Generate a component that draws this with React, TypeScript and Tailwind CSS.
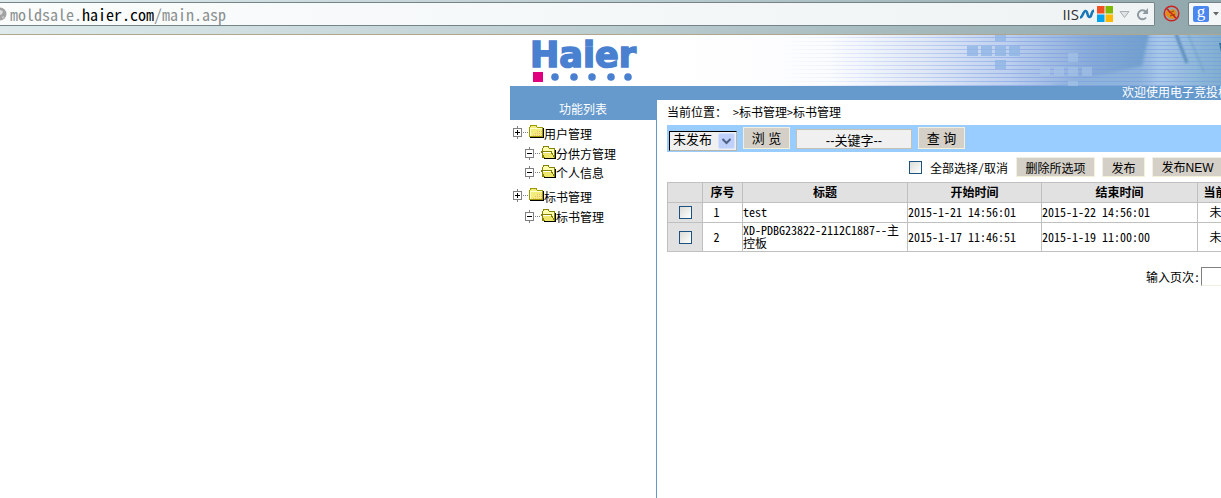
import { useState } from 'react';

const UI_FONT = "font-['Noto_Sans_Mono_CJK_SC','Noto_Sans_CJK_SC',monospace]";
const CONTROL_FONT = "font-['Liberation_Sans','Noto_Sans_CJK_SC',sans-serif]";
const BUTTON =
  'shrink-0 whitespace-nowrap border border-[#f1efe2] border-b-[#f5f1d8] border-r-[#f5f1d8] bg-[#d4d0c8] text-center text-black';
const CHECKBOX =
  'block size-[13px] shrink-0 appearance-none border border-[#1c5180] bg-linear-to-br from-[#dcdcd7] to-white checked:bg-[#21a121]';

function Expander({ open }: { open: boolean }) {
  return (
    <svg width="16" height="16" viewBox="0 0 16 16" shapeRendering="crispEdges" aria-hidden="true" className="shrink-0">
      <path d="M4.5 1v2M4.5 12v2" stroke="#808080" />
      <rect x="0.5" y="3.5" width="8" height="8" fill="#fff" stroke="#808080" />
      <path d="M2 7.5h5" stroke="#000" />
      {!open && <path d="M4.5 5v5" stroke="#000" />}
      <path d="M10 7.5h6" stroke="#808080" strokeDasharray="1 1" />
    </svg>
  );
}

function Folder({ open }: { open: boolean }) {
  return (
    <svg width="15" height="16" viewBox="0 0 15 16" shapeRendering="crispEdges" aria-hidden="true" className="shrink-0">
      {open ? (
        <>
          <path d="M13.5 4v8.500" stroke="#000" strokeWidth="2" />
          <path d="M1.500 11.500v-9l1.500-2h4l1.500 2h4.500v9z" fill="#ffffad" stroke="#848200" />
          <path d="M0.500 5.500h9.500l3.500 6.500h-10z" fill="#efe76b" stroke="#848200" />
          <path d="M2 6.500h8" stroke="#fff" />
          <path d="M3 12.500h12" stroke="#000" />
        </>
      ) : (
        <>
          <path d="M0.500 11.500v-9l1.500-2h5l1.500 2h5v9z" fill="#f3ee79" stroke="#9c9a00" />
          <path d="M1.500 11v-7.500h11.500" fill="none" stroke="#ffffce" />
          <path d="M4 10.500h9M6 8.500h7M8 6.500h5" stroke="#f0b880" strokeDasharray="1 1" />
          <path d="M1 12.500h13.500v-9.500" fill="none" stroke="#000" />
        </>
      )}
    </svg>
  );
}

function TreeItem({ label, open = false }: { label: string; open?: boolean }) {
  return (
    <a href="#" className={open ? 'flex h-[19px] items-center pl-[15px]' : 'flex h-[22px] items-center pl-[3px]'}>
      <span className="flex pb-[2px]">
        <Expander open={open} />
        <Folder open={open} />
      </span>
      <span className="whitespace-nowrap pb-[2px]">{label}</span>
    </a>
  );
}

function BrowserBar() {
  return (
    <header className="flex h-[35px] items-start overflow-hidden border-b border-[#b0a68f] bg-linear-to-r from-[#deeaec] via-[#bccdd0] to-[#90a7ab] pt-[2px]">
      <div className="flex h-6 min-w-0 flex-1 items-center rounded-r-xs border border-l-0 border-[#748488] bg-linear-to-r from-[#fbfdfd] to-[#eff3f3]">
        <svg width="7" height="16" viewBox="0 0 7 16" aria-hidden="true" className="shrink-0">
          <circle cx="0" cy="8" r="6.500" fill="#a2a2a2" />
          <path d="M0 4l3 1-1 3-2 1zM2 11l2-1-1 3z" fill="#dedede" />
        </svg>
        <span className="ml-[3px] min-w-0 flex-1 whitespace-nowrap text-[16px] leading-6 text-[#8a8f90]">
          moldsale.<span className="text-black">haier.com</span>/main.asp
        </span>
        <div className="flex shrink-0 items-center pr-[5px]">
          <span className="font-['Open_Sans',sans-serif] text-[15px] font-medium leading-5 text-[#303030]">IIS</span>
          <svg width="16" height="12" viewBox="0 0 16 12" aria-hidden="true" className="mr-[2px]">
            <path d="M1 9.500c3 0 3-6.500 5.500-6.500S8 9 10.500 9 12 3 15 2.500" fill="none" stroke="#1976b9" strokeWidth="2.600" />
          </svg>
          <svg width="16" height="16" viewBox="0 0 16 16" aria-hidden="true">
            <path d="M0 0h7.500v7.500H0z" fill="#f25022" />
            <path d="M8.500 0H16v7.500H8.500z" fill="#7fba00" />
            <path d="M0 8.500h7.500V16H0z" fill="#00a4ef" />
            <path d="M8.500 8.500H16V16H8.500z" fill="#ffb900" />
          </svg>
          <button type="button" aria-label="历史记录" className="ml-[6px]">
            <svg width="11" height="9" viewBox="0 0 11 9" className="block">
              <path d="M1 1.500h9L5.500 7.500z" fill="#dfe3e5" stroke="#a9afb3" />
            </svg>
          </button>
          <button type="button" aria-label="刷新" className="ml-[6px]">
            <svg width="13" height="13" viewBox="0 0 13 13" className="block">
              <path d="M10 9.500A4.500 4.500 0 1 1 9.500 3.500" fill="none" stroke="#8f9aa3" strokeWidth="2" />
              <path d="M12 0v6H6.500z" fill="#8f9aa3" />
            </svg>
          </button>
        </div>
      </div>
      <button type="button" aria-label="Firebug" className="ml-2 mt-[3px] shrink-0">
        <svg width="17" height="17" viewBox="0 0 17 17" className="block">
          <path d="M3 6l2-1 2 1 2-2 3 1 2 3-1 4-3 2-4-1-2-2-2-1z" fill="#e58b1c" />
          <path d="M6 8l5-2M7 11l5-2M5 4l1 3M12 13l-1-3" stroke="#8d4b0d" />
          <circle cx="8.500" cy="8.500" r="7.300" fill="none" stroke="#cc2222" strokeWidth="1.500" />
          <path d="M3.300 3.300l10.400 10.400" stroke="#cc2222" strokeWidth="1.500" />
        </svg>
      </button>
      <div className="ml-2 flex h-6 w-[33px] shrink-0 items-center rounded-l-xs border border-r-0 border-[#748488] bg-[#f4f7f7] pl-1">
        <button type="button" aria-label="搜索引擎" className="flex items-center gap-1">
          <span className="flex size-4 items-center justify-center rounded-xs bg-[#4a86f0] pb-1 font-['Liberation_Serif',serif] text-[17px] leading-4 text-white">g</span>
          <svg width="6" height="4" viewBox="0 0 6 4" aria-hidden="true">
            <path d="M0 0h6L3 3.500z" fill="#666" />
          </svg>
        </button>
      </div>
    </header>
  );
}

function BannerArt() {
  return (
    <svg width="571" height="51" viewBox="650 35 571 51" aria-hidden="true" className="block shrink-0">
      <defs>
        <linearGradient id="sky" gradientUnits="userSpaceOnUse" x1="650" y1="0" x2="1150" y2="0">
          <stop offset="0" stopColor="#fff" />
          <stop offset="0.360" stopColor="#fbfcff" />
          <stop offset="0.550" stopColor="#e0e8f6" />
          <stop offset="0.720" stopColor="#bccfee" />
          <stop offset="0.880" stopColor="#88abd8" />
          <stop offset="1" stopColor="#6f9fcb" />
        </linearGradient>
        <linearGradient id="glow" gradientUnits="userSpaceOnUse" x1="1140" y1="0" x2="1221" y2="0">
          <stop offset="0" stopColor="#8fb4dc" />
          <stop offset="0.250" stopColor="#a9c8e9" />
          <stop offset="0.600" stopColor="#94bbdc" />
          <stop offset="1" stopColor="#7fadd0" />
        </linearGradient>
        <linearGradient id="lineFade" gradientUnits="userSpaceOnUse" x1="780" y1="0" x2="1221" y2="0">
          <stop offset="0" stopColor="#7799e6" stopOpacity="0" />
          <stop offset="0.550" stopColor="#7799e6" stopOpacity="0.550" />
          <stop offset="1" stopColor="#6a94d8" stopOpacity="0.400" />
        </linearGradient>
        <filter id="soft" x="-20%" y="-20%" width="140%" height="140%">
          <feGaussianBlur stdDeviation="1.500" />
        </filter>
        <filter id="streak" filterUnits="userSpaceOnUse" x="1160" y="25" width="70" height="60">
          <feGaussianBlur stdDeviation="1" />
        </filter>
      </defs>
      <rect x="650" y="35" width="571" height="51" fill="url(#sky)" />
      <path d="M1150 30h80v60h-170l-10-4 92-20z" fill="url(#glow)" filter="url(#soft)" />
      <path d="M1176 34l11 29" stroke="#4b80ad" strokeWidth="3" opacity="0.800" filter="url(#streak)" />
      <path d="M1188 34l16 38" stroke="#6f9fc4" strokeWidth="2" opacity="0.600" filter="url(#streak)" />
      <path d="M1219 43h2v9z" fill="#2c6d94" />
      {Array.from({ length: 13 }, (_, i) => (
        <rect key={i} x="780" y={37 + i * 4} width="441" height="1" fill="url(#lineFade)" />
      ))}
      <g fill="#8fb5e4" opacity="0.800">
        <path d="M995 35h11v6h-11zM967 46h11v10h-11zM981 46h11v10h-11zM995 46h11v10h-11zM1009 46h11v10h-11zM995 60h11v9h-11z" />
      </g>
      <g fill="#a9c6ea" opacity="0.550">
        <path d="M1068 53h10v9h-10zM1040 67h10v9h-10zM1054 67h10v9h-10zM1068 67h10v9h-10zM1082 67h10v9h-10zM1068 81h10v5h-10z" />
      </g>
    </svg>
  );
}

function Banner() {
  return (
    <div className="flex h-[51px] overflow-hidden bg-white">
      <svg width="140" height="51" viewBox="0 0 140 51" role="img" aria-label="Haier" className="block shrink-0">
        <text x="20" y="32" fontSize="35" fontWeight="700" fill="#4a80d0" stroke="#4a80d0" strokeWidth="1.600" className="font-['DejaVu_Sans',sans-serif]">
          Haier
        </text>
        <rect x="23" y="37" width="10" height="10" fill="#e0007f" />
        {[45, 64, 82, 101, 118].map((cx) => (
          <circle key={cx} cx={cx} cy="42" r="3.800" fill="#4a80d0" />
        ))}
      </svg>
      <BannerArt />
    </div>
  );
}

const ROWS = [
  { id: 1, title: 'test', start: '2015-1-21 14:56:01', end: '2015-1-22 14:56:01', status: '未发布' },
  { id: 2, title: 'XD-PDBG23822-2112C1887--主控板', start: '2015-1-17 11:46:51', end: '2015-1-19 11:00:00', status: '未发布' },
];

export default function App() {
  const [selected, setSelected] = useState<number[]>([]);
  const toggle = (id: number) =>
    setSelected((ids) => (ids.includes(id) ? ids.filter((i) => i !== id) : [...ids, id]));
  const cell = 'border border-[#c0c0c0] px-0 pt-0 pb-[2px]';

  return (
    <div className={`flex min-h-screen flex-col overflow-hidden bg-white text-[12px] leading-[13px] text-black ${UI_FONT}`}>
      <BrowserBar />
      <div className="flex flex-1 flex-col pl-[510px]">
        <Banner />
        <div className="flex flex-1">
          <nav className="w-[146px] shrink-0">
            <h2 className="flex h-[34px] items-end justify-center bg-[#6699cc] pb-[5px] text-white">功能列表</h2>
            <div className="flex flex-col gap-[3px] pt-[3px]">
              <div>
                <TreeItem label="用户管理" />
                <TreeItem label="分供方管理" open />
                <TreeItem label="个人信息" open />
              </div>
              <div>
                <TreeItem label="标书管理" />
                <TreeItem label="标书管理" open />
              </div>
            </div>
          </nav>
          <div className="flex min-w-0 flex-1 flex-col border-l border-[#6699cc]">
            <div className="flex h-[14px] items-center justify-end bg-[#6699cc] pb-[3px] text-white">
              <span className="w-[99px] whitespace-nowrap">欢迎使用电子竞投标系统</span>
            </div>
            <main className="min-w-0 flex-1 overflow-hidden pl-[10px]">
              <p className="flex h-[25px] items-center whitespace-pre pb-[3px]">{'当前位置： >标书管理>标书管理'}</p>
              <form
                className={`flex h-[27px] items-start gap-[6px] bg-[#99ccff] pl-[2px] pt-[2px] text-[13px] ${CONTROL_FONT}`}
                onSubmit={(e) => e.preventDefault()}
              >
                <div className="relative mt-1 h-5 w-[68px] shrink-0">
                  <select aria-label="状态" className="h-full w-full appearance-none border border-b-[#b8b5aa] border-r-[#b8b5aa] border-l-black border-t-black bg-[#f0f0f0] pb-[2px] pl-[3px] leading-4">
                    <option>未发布</option>
                    <option>已发布</option>
                  </select>
                  <svg width="17" height="16" viewBox="0 0 17 16" aria-hidden="true" className="pointer-events-none absolute right-[2px] top-[2px]">
                    <rect x="0.500" y="0.500" width="16" height="15" rx="1.500" fill="#bfd0fb" stroke="#d6e2fd" />
                    <path d="M4.500 6l4 4 4-4" fill="none" stroke="#4d6185" strokeWidth="2" />
                  </svg>
                </div>
                <button type="button" className={`h-[22px] w-[47px] ${BUTTON}`}>浏 览</button>
                <input
                  type="text"
                  aria-label="关键字"
                  defaultValue="--关键字--"
                  className="mt-[2px] h-5 w-[116px] shrink-0 border border-[#c3c0b8] bg-[#f0f0f0] text-center"
                />
                <button type="submit" className={`h-[22px] w-[47px] ${BUTTON}`}>查 询</button>
              </form>
              <div className="flex h-[30px] items-center pl-[242px]">
                <label className="mr-2 flex shrink-0 items-center gap-2 whitespace-nowrap">
                  <input
                    type="checkbox"
                    className={CHECKBOX}
                    checked={selected.length === ROWS.length}
                    onChange={() => setSelected(selected.length === ROWS.length ? [] : ROWS.map((r) => r.id))}
                  />
                  <span>全部选择/取消</span>
                </label>
                <div className="flex gap-[7px]">
                  <button type="button" className={`h-5 w-[79px] ${BUTTON}`}>删除所选项</button>
                  <button type="button" className={`h-5 w-[43px] ${BUTTON}`}>发布</button>
                  <button type="button" className={`h-5 w-[71px] ${BUTTON}`}>
                    发布<span className="font-['Liberation_Sans',sans-serif]">NEW</span>
                  </button>
                </div>
              </div>
              <table className="w-[590px] table-fixed border-collapse">
                <thead>
                  <tr className="h-5 bg-[#e1e1e1]">
                    <th aria-label="选择" className={`w-[35px] ${cell}`} />
                    <th className={`w-[40px] ${cell}`}>序号</th>
                    <th className={`w-[165px] ${cell}`}>标题</th>
                    <th className={`w-[134px] ${cell}`}>开始时间</th>
                    <th className={`w-[156px] ${cell}`}>结束时间</th>
                    <th className={`w-[60px] ${cell}`}>当前状态</th>
                  </tr>
                </thead>
                <tbody>
                  {ROWS.map((row) => (
                    <tr key={row.id} className="h-5">
                      <td className="border border-[#c0c0c0] bg-[#e1e1e1] p-0">
                        <input
                          type="checkbox"
                          aria-label={`选择 ${row.id}`}
                          checked={selected.includes(row.id)}
                          onChange={() => toggle(row.id)}
                          className={`mx-auto ${CHECKBOX}`}
                        />
                      </td>
                      <td className={`${cell} text-center`}>
                        <span className="pr-3">{row.id}</span>
                      </td>
                      <td className={`break-words ${cell}`}>{row.title}</td>
                      <td className={cell}>{row.start}</td>
                      <td className={cell}>{row.end}</td>
                      <td className={`${cell} text-center`}>{row.status}</td>
                    </tr>
                  ))}
                </tbody>
              </table>
              <label className="mt-[15px] flex items-center justify-end whitespace-nowrap">
                输入页次:
                <input type="text" className="ml-px h-[19px] w-5 shrink-0 border border-r-0 border-b-[#f1efe2] border-l-[#808080] border-t-[#808080] bg-white" />
              </label>
            </main>
          </div>
        </div>
      </div>
    </div>
  );
}
